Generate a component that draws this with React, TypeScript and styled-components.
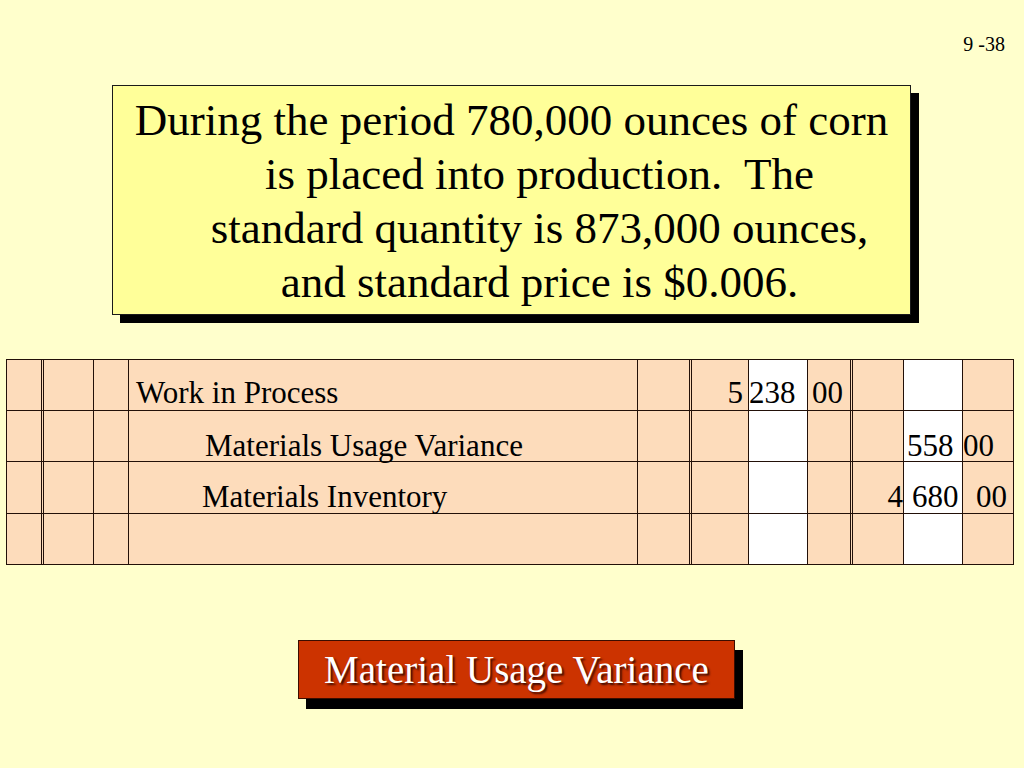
import React from "react";
import styled, { createGlobalStyle } from "styled-components";

const Global = createGlobalStyle`
  html, body { margin: 0; padding: 0; background: #ffffcc; }
  body { font-family: "Liberation Serif", "Times New Roman", serif; color: #000; }
`;

const Slide = styled.div`
  width: 1024px;
  height: 768px;
  display: flex;
  flex-direction: column;
  align-items: flex-start;
  background: #ffffcc;
  overflow: hidden;
`;

const PageNum = styled.div`
  align-self: stretch;
  text-align: right;
  padding: 34px 19px 0 0;
  font-size: 20px;
  line-height: 20px;
`;

const Callout = styled.div`
  box-sizing: border-box;
  margin: 31px 0 0 112px;
  width: 799px;
  height: 230px;
  padding-top: 7px;
  background: #ffff99;
  border: 1px solid #1a1a1a;
  box-shadow: 8px 8px 0 #000;
`;

const Line = styled.div<{ $indent: number }>`
  font-size: 45px;
  line-height: 54px;
  text-align: center;
  white-space: pre;
  padding-left: ${(p) => p.$indent}px;
`;

const Ledger = styled.div`
  box-sizing: border-box;
  margin: 44px 0 0 6px;
  width: 1008px;
  border: 1px solid #221008;
  background: #fddcbb;
`;

const Row = styled.div<{ $h: number; $last?: boolean }>`
  box-sizing: border-box;
  display: grid;
  grid-template-columns: 37px 50px 35px 509px 54px 57px 59px 45px 51px 59px 50px;
  height: ${(p) => p.$h}px;
  border-bottom: ${(p) => (p.$last ? "none" : "1px solid #221008")};
`;

const Cell = styled.div<{
  $double?: boolean;
  $white?: boolean;
  $end?: boolean;
  $right?: boolean;
  $pl?: number;
  $pr?: number;
  $pb?: number;
}>`
  box-sizing: border-box;
  display: flex;
  align-items: flex-end;
  justify-content: ${(p) => (p.$right ? "flex-end" : "flex-start")};
  padding: 0 ${(p) => p.$pr ?? 0}px ${(p) => p.$pb ?? 1}px ${(p) => p.$pl ?? 0}px;
  background: ${(p) => (p.$white ? "#ffffff" : "transparent")};
  border-right: ${(p) =>
    p.$end ? "none" : p.$double ? "3px double #221008" : "1px solid #221008"};
  font-size: 31px;
  line-height: 31px;
  white-space: pre;
  overflow: visible;
`;

const Button = styled.div`
  box-sizing: border-box;
  margin: 75px 0 0 298px;
  width: 437px;
  height: 59px;
  background: #cc3300;
  border: 1px solid #3a0d00;
  box-shadow: 8px 10px 0 #000;
  color: #fff;
  font-size: 39px;
  line-height: 57px;
  text-align: center;
  text-shadow: 2px 2px 2px rgba(50, 8, 0, 0.9);
`;

type CellSpec = {
  text?: string;
  right?: boolean;
  pl?: number;
  pr?: number;
};

const doubleCols = new Set([0, 4, 7]);
const whiteCols = new Set([6, 9]);

const rows: { h: number; pb: number; cells: Record<number, CellSpec> }[] = [
  {
    h: 51,
    pb: 2,
    cells: {
      3: { text: "Work in Process", pl: 7 },
      5: { text: "5", right: true, pr: 5 },
      6: { text: "238", pl: 0 },
      7: { text: "00", pl: 4 },
    },
  },
  {
    h: 51,
    pb: 0,
    cells: {
      3: { text: "Materials Usage Variance", pl: 76 },
      9: { text: "558", pl: 3 },
      10: { text: "00", pl: 0 },
    },
  },
  {
    h: 52,
    pb: 1,
    cells: {
      3: { text: "Materials Inventory", pl: 73 },
      8: { text: "4", right: true, pr: 0 },
      9: { text: "680", pl: 8 },
      10: { text: "00", pl: 13 },
    },
  },
  { h: 50, pb: 1, cells: {} },
];

export default function App() {
  return (
    <>
      <Global />
      <Slide>
        <PageNum>9 -38</PageNum>
        <Callout>
          <Line $indent={0}>During the period 780,000 ounces of corn</Line>
          <Line $indent={56}>is placed into production.  The</Line>
          <Line $indent={56}>standard quantity is 873,000 ounces,</Line>
          <Line $indent={56}>and standard price is $0.006.</Line>
        </Callout>
        <Ledger>
          {rows.map((r, ri) => (
            <Row key={ri} $h={r.h} $last={ri === rows.length - 1}>
              {Array.from({ length: 11 }).map((_, ci) => {
                const c = r.cells[ci] || {};
                return (
                  <Cell
                    key={ci}
                    $double={doubleCols.has(ci)}
                    $white={whiteCols.has(ci)}
                    $end={ci === 10}
                    $right={c.right}
                    $pl={c.pl}
                    $pr={c.pr}
                    $pb={r.pb}
                  >
                    {c.text}
                  </Cell>
                );
              })}
            </Row>
          ))}
        </Ledger>
        <Button>Material Usage Variance</Button>
      </Slide>
    </>
  );
}
